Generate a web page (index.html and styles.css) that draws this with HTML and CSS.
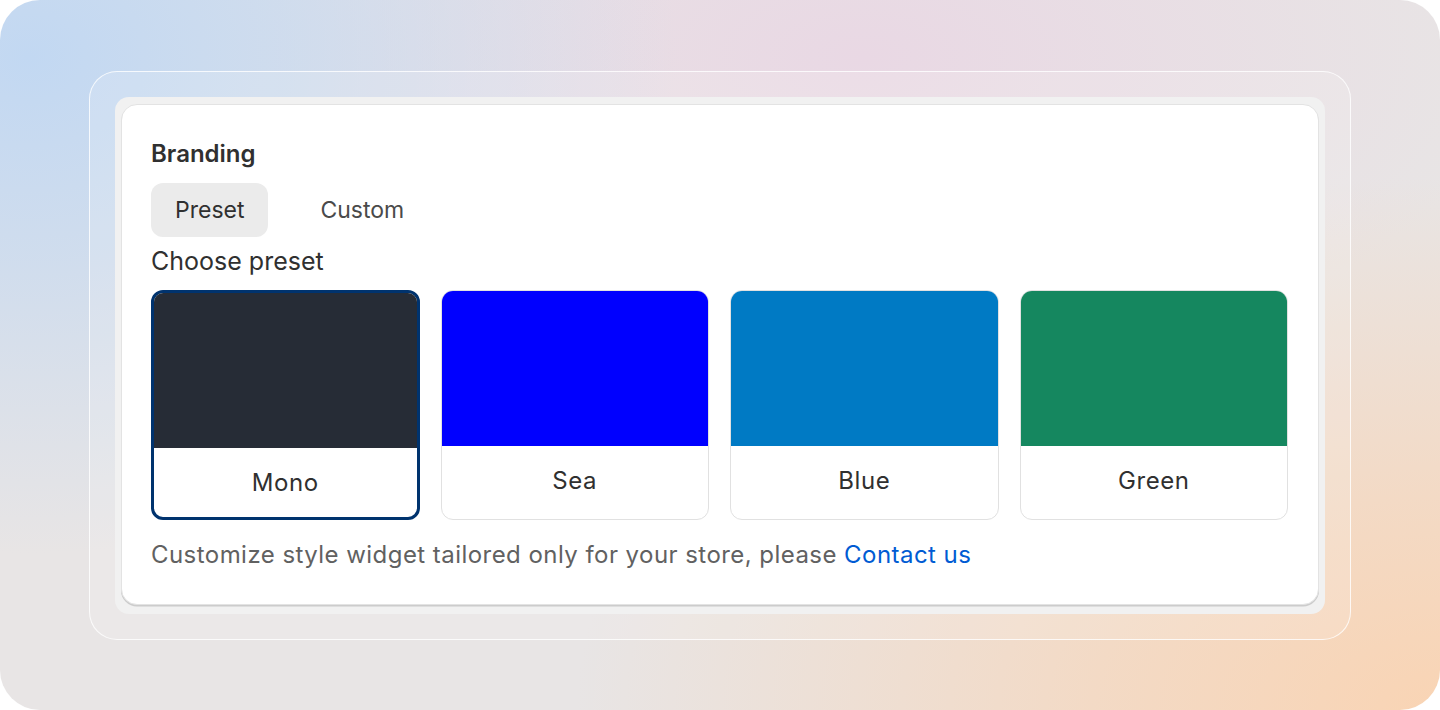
FILE: index.html
```html
<!DOCTYPE html>
<html lang="en">
<head>
<meta charset="utf-8">
<title>Branding</title>
<link rel="stylesheet" href="styles.css">
</head>
<body>
<div class="stage">
  <div class="frame">
    <div class="tray">
      <section class="card">
        <h2 class="title">Branding</h2>
        <div class="tabs">
          <button class="tab tab-active">Preset</button>
          <button class="tab">Custom</button>
        </div>
        <div class="label">Choose preset</div>
        <div class="presets">
          <div class="preset preset-selected">
            <div class="swatch swatch-mono"></div>
            <div class="preset-name">Mono</div>
          </div>
          <div class="preset">
            <div class="swatch swatch-sea"></div>
            <div class="preset-name">Sea</div>
          </div>
          <div class="preset">
            <div class="swatch swatch-blue"></div>
            <div class="preset-name">Blue</div>
          </div>
          <div class="preset">
            <div class="swatch swatch-green"></div>
            <div class="preset-name">Green</div>
          </div>
        </div>
        <p class="note">Customize style widget tailored only for your store, please <a class="link" href="#">Contact us</a></p>
      </section>
    </div>
  </div>
</div>
</body>
</html>
```
FILE: styles.css
```css
* { box-sizing: border-box; }
html, body { margin: 0; padding: 0; background: #ffffff; }
body { font-family: Inter, "Noto Sans", sans-serif; color: #303030; }

.stage {
  width: 1440px;
  height: 710px;
  border-radius: 40px;
  display: flex;
  align-items: center;
  justify-content: center;
  background:
    radial-gradient(ellipse 45% 70% at 2% 8%, rgba(194,216,242,1) 0%, rgba(194,216,242,0.65) 40%, rgba(194,216,242,0) 100%),
    radial-gradient(ellipse 60% 75% at 100% 100%, rgba(249,212,180,1) 0%, rgba(249,212,180,0.65) 40%, rgba(249,212,180,0) 100%),
    radial-gradient(ellipse 45% 45% at 60% 8%, rgba(233,216,228,1) 0%, rgba(233,216,228,0) 100%),
    #e8e5e5;
}

.frame {
  width: 1262px;
  height: 569px;
  padding: 25px;
  border-radius: 28px;
  border: 1.5px solid rgba(255,255,255,0.8);
  background: rgba(255,255,255,0.14);
  display: flex;
}

.tray {
  flex: 1;
  padding: 7px 6px 9px;
  border-radius: 14px;
  background: #f1f1f1;
  display: flex;
}

.card {
  flex: 1;
  background: #ffffff;
  border: 1px solid #e3e3e3;
  border-radius: 16px;
  box-shadow: 0 1.5px 0 #cccccc;
  padding: 35px 30px 0 29px;
}

.title {
  margin: 0;
  font-size: 24px;
  line-height: 28px;
  font-weight: 600;
  color: #303030;
}

.tabs {
  display: flex;
  gap: 30px;
  margin-top: 15px;
}

.tab {
  font-family: inherit;
  font-size: 23px;
  line-height: 26px;
  color: #303030;
  background: transparent;
  border: 0;
  border-radius: 12px;
  padding: 14px 24px;
  cursor: pointer;
}
.tab-active { background: #ebebeb; }
.tab:not(.tab-active) { color: #4a4a4a; padding-left: 22px; }

.label {
  margin-top: 10px;
  font-size: 25px;
  line-height: 28px;
  color: #303030;
}

.presets {
  margin-top: 15px;
  display: grid;
  grid-template-columns: repeat(4, 1fr);
  gap: 21px;
}

.preset {
  height: 230px;
  border: 1px solid #e1e1e1;
  border-radius: 12px;
  overflow: hidden;
  display: flex;
  flex-direction: column;
  background: #ffffff;
}
.preset-selected { border: 3px solid #00336e; }

.swatch { height: 155px; flex: none; }
.swatch-mono { background: #262c36; }
.swatch-sea { background: #0000ff; }
.swatch-blue { background: #007ac4; }
.swatch-green { background: #15875f; }

.preset-name {
  flex: 1;
  display: flex;
  align-items: center;
  justify-content: center;
  font-size: 24px;
  letter-spacing: 0.6px;
  padding-bottom: 4px;
  color: #303030;
}
.preset-selected .preset-name { padding-bottom: 0; }

.note {
  margin: 21px 0 0;
  font-size: 24px;
  line-height: 28px;
  letter-spacing: 0.45px;
  color: #616161;
}
.link { color: #005bd3; text-decoration: none; }
```
